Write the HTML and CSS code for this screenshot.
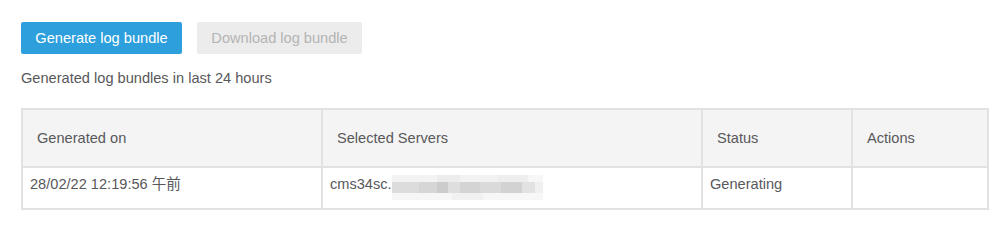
FILE: index.html
```html
<!DOCTYPE html>
<html>
<head>
<meta charset="utf-8">
<link rel="stylesheet" href="styles.css">
</head>
<body>
<div class="page">
  <div class="actions">
    <button class="btn btn-primary">Generate log bundle</button>
    <button class="btn btn-disabled" disabled>Download log bundle</button>
  </div>
  <p class="caption">Generated log bundles in last 24 hours</p>
  <table class="grid">
    <colgroup>
      <col class="c1"><col class="c2"><col class="c3"><col class="c4">
    </colgroup>
    <thead>
      <tr>
        <th>Generated on</th>
        <th>Selected Servers</th>
        <th>Status</th>
        <th>Actions</th>
      </tr>
    </thead>
    <tbody>
      <tr>
        <td>28/02/22 12:19:56 午前</td>
        <td>cms34sc.<span class="redacted"><span class="band top"></span><span class="band mid"></span><span class="band bot"></span></span></td>
        <td>Generating</td>
        <td></td>
      </tr>
    </tbody>
  </table>
</div>
</body>
</html>
```
FILE: styles.css
```css
html, body {
  margin: 0;
  padding: 0;
  background: #ffffff;
}
.page {
  padding: 22px 10px 0 21px;
  font-family: "Liberation Sans", Arial, "Noto Sans CJK JP", sans-serif;
  font-size: 14.6px;
  color: #58585b;
}
.actions {
  display: flex;
  gap: 15px;
}
.btn {
  height: 32px;
  border: 0;
  border-radius: 2px;
  padding: 0 10px;
  font-family: inherit;
  font-size: 14.6px;
  line-height: 32px;
}
.btn-primary {
  background: #2d9fdc;
  color: #ffffff;
  width: 161px;
}
.btn-disabled {
  background: #ececec;
  color: #b4b4b4;
  width: 165px;
}
.caption {
  margin: 16px 0 0 0;
  line-height: 16px;
  color: #58585b;
}
.grid {
  margin-top: 22px;
  width: 966px;
  border-collapse: collapse;
  table-layout: fixed;
  border: 2px solid #e2e2e2;
}
.c1 { width: 300px; }
.c2 { width: 380px; }
.c3 { width: 150px; }
.c4 { width: 136px; }
.grid th, .grid td {
  border: 2px solid #e2e2e2;
  text-align: left;
  font-weight: normal;
}
.grid th {
  background: #f4f4f4;
  height: 56px;
  padding: 0 14px;
  vertical-align: middle;
}
.grid td {
  height: 42px;
  box-sizing: border-box;
  padding: 6px 7px 0;
  line-height: 20px;
  vertical-align: top;
  background: #ffffff;
}
.redacted {
  display: inline-block;
  width: 151px;
  height: 25px;
  vertical-align: -11px;
  filter: blur(0.6px);
}
.band { display: block; }
.band.top {
  height: 7px;
  background: linear-gradient(90deg, #f3f3f3 0 30%, #ececec 30% 45%, #f2f2f2 45% 70%, #eeeeee 70% 90%, #f7f7f7 90%);
}
.band.mid {
  height: 11px;
  background: linear-gradient(90deg, #dcdcdc 0 18%, #d6d6d6 18% 30%, #cccccc 30% 37%, #dedede 37% 45%, #d4d4d4 45% 58%, #dadada 58% 72%, #d2d2d2 72% 86%, #e2e2e2 86% 95%, #f0f0f0 95%);
}
.band.bot {
  height: 7px;
  background: linear-gradient(90deg, #f6f6f6 0 40%, #f1f1f1 40% 60%, #f7f7f7 60%);
}
```
